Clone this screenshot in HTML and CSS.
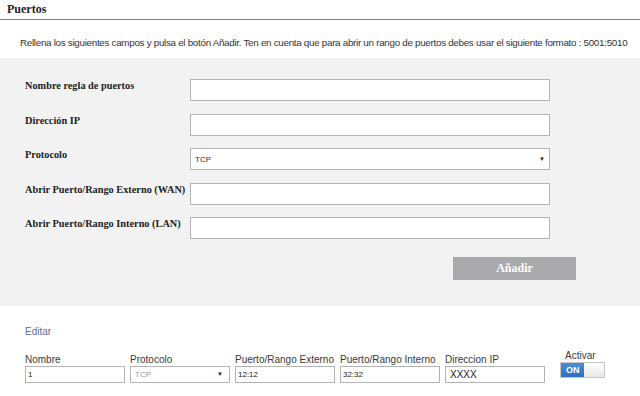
FILE: index.html
```html
<!DOCTYPE html>
<html lang="es">
<head>
    <meta charset="UTF-8">
    <title>Puertos</title>
    <link rel="stylesheet" href="styles.css">
</head>
<body>
    <h2 class="title">Puertos</h2>
    <p class="intro">Rellena los siguientes campos y pulsa el botón Añadir. Ten en cuenta que para abrir un rango de puertos debes usar el siguiente formato : 5001:5010</p>

    <div class="panel">
        <div class="row">
            <label for="nombre">Nombre regla de puertos</label>
            <input type="text" id="nombre">
        </div>
        <div class="row">
            <label for="ip">Dirección IP</label>
            <input type="text" id="ip">
        </div>
        <div class="row">
            <label for="proto">Protocolo</label>
            <div class="select">TCP<span class="arrow">▼</span></div>
        </div>
        <div class="row">
            <label for="wan">Abrir Puerto/Rango Externo (WAN)</label>
            <input type="text" id="wan">
        </div>
        <div class="row">
            <label for="lan">Abrir Puerto/Rango Interno (LAN)</label>
            <input type="text" id="lan">
        </div>
        <div class="actions">
            <button class="add-btn">Añadir</button>
        </div>
    </div>

    <div class="rules">
        <a class="edit" href="#">Editar</a>
        <div class="rule">
            <div class="cell">
                <span>Nombre</span>
                <div class="box">1</div>
            </div>
            <div class="cell">
                <span>Protocolo</span>
                <div class="box muted">TCP<span class="arrow">▼</span></div>
            </div>
            <div class="cell">
                <span>Puerto/Rango Externo</span>
                <div class="box">12:12</div>
            </div>
            <div class="cell">
                <span>Puerto/Rango Interno</span>
                <div class="box">32:32</div>
            </div>
            <div class="cell">
                <span>Direccion IP</span>
                <div class="box ip">XXXX</div>
            </div>
            <div class="cell toggle-cell">
                <span>Activar</span>
                <div class="toggle"><span class="on">ON</span><span class="off"></span></div>
            </div>
        </div>
    </div>
</body>
</html>
```

FILE: styles.css
```css
body {
    margin: 0;
    background-color: #fff;
    font-family: "Liberation Sans", Arial, sans-serif;
    color: #333;
}
.title {
    margin: 0;
    padding: 2px 7px 0;
    height: 17px;
    font-family: "Liberation Serif", serif;
    font-size: 12px;
    font-weight: bold;
    color: #222;
    border-bottom: 1px solid #808080;
}
.intro {
    margin: 0;
    padding: 17px 0 0 20px;
    height: 21px;
    font-size: 9.8px;
    letter-spacing: -0.28px;
    color: #333;
    white-space: nowrap;
}
.panel {
    background-color: #f2f2f2;
    padding: 21px 0 0 0;
    height: 227px;
}
.row {
    display: flex;
    align-items: flex-start;
    height: 34.5px;
}
.row label {
    flex: 0 0 165px;
    padding: 0 0 0 25px;
    margin-top: 1px;
    font-family: "Liberation Serif", serif;
    font-size: 10.3px;
    font-weight: bold;
    color: #222;
    white-space: nowrap;
}
.row input, .select {
    box-sizing: border-box;
    width: 360px;
    height: 22px;
    margin: 0;
    border: 1px solid #b4b4b4;
    background-color: #fff;
}
.select {
    display: flex;
    align-items: center;
    justify-content: space-between;
    padding: 0 4px;
    font-size: 8px;
    color: #333;
}
.arrow {
    font-size: 6px;
    color: #222;
}
.actions {
    display: flex;
    justify-content: flex-end;
    padding: 5px 64px 0 0;
}
.add-btn {
    width: 123px;
    height: 23px;
    border: none;
    background-color: #a7a9ac;
    color: #fff;
    font-family: "Liberation Serif", serif;
    font-size: 12px;
    font-weight: bold;
}
.rules {
    padding: 20px 0 0 25px;
}
.edit {
    display: block;
    font-size: 10px;
    color: #5b6ea6;
    text-decoration: none;
    height: 20px;
}
.rule {
    display: flex;
    gap: 5px;
    margin-top: 8px;
}
.cell {
    display: flex;
    flex-direction: column;
    width: 100px;
    font-size: 10px;
    color: #3a3a3a;
}
.cell span {
    line-height: 11px;
    margin-bottom: 1px;
}
.box {
    box-sizing: border-box;
    height: 17px;
    border: 1px solid #b4b4b4;
    background-color: #fff;
    padding: 0 2px;
    font-size: 8px;
    line-height: 15px;
    color: #222;
    display: flex;
    justify-content: space-between;
    align-items: center;
}
.box.muted {
    color: #999;
    padding: 0 6px 0 4px;
}
.box.ip {
    font-size: 10px;
    padding-left: 4px;
    justify-content: flex-start;
}
.toggle-cell {
    margin-left: 10px;
    margin-top: -4px;
    width: 50px;
}
.toggle-cell span {
    padding-left: 5px;
}
.toggle {
    display: flex;
    width: 45px;
    height: 16px;
    border: 1px solid #c6c6c6;
    box-sizing: border-box;
}
.toggle .on {
    width: 23px;
    padding: 0 0 0 5px;
    background: linear-gradient(#4a8fd6, #2f6fbf);
    color: #fff;
    font-size: 9px;
    font-weight: bold;
    line-height: 14px;
    margin: 0;
    box-sizing: border-box;
}
.toggle .off {
    flex: 1;
    padding: 0;
    margin: 0;
    background: linear-gradient(#fff, #e6e6e6);
}
```
